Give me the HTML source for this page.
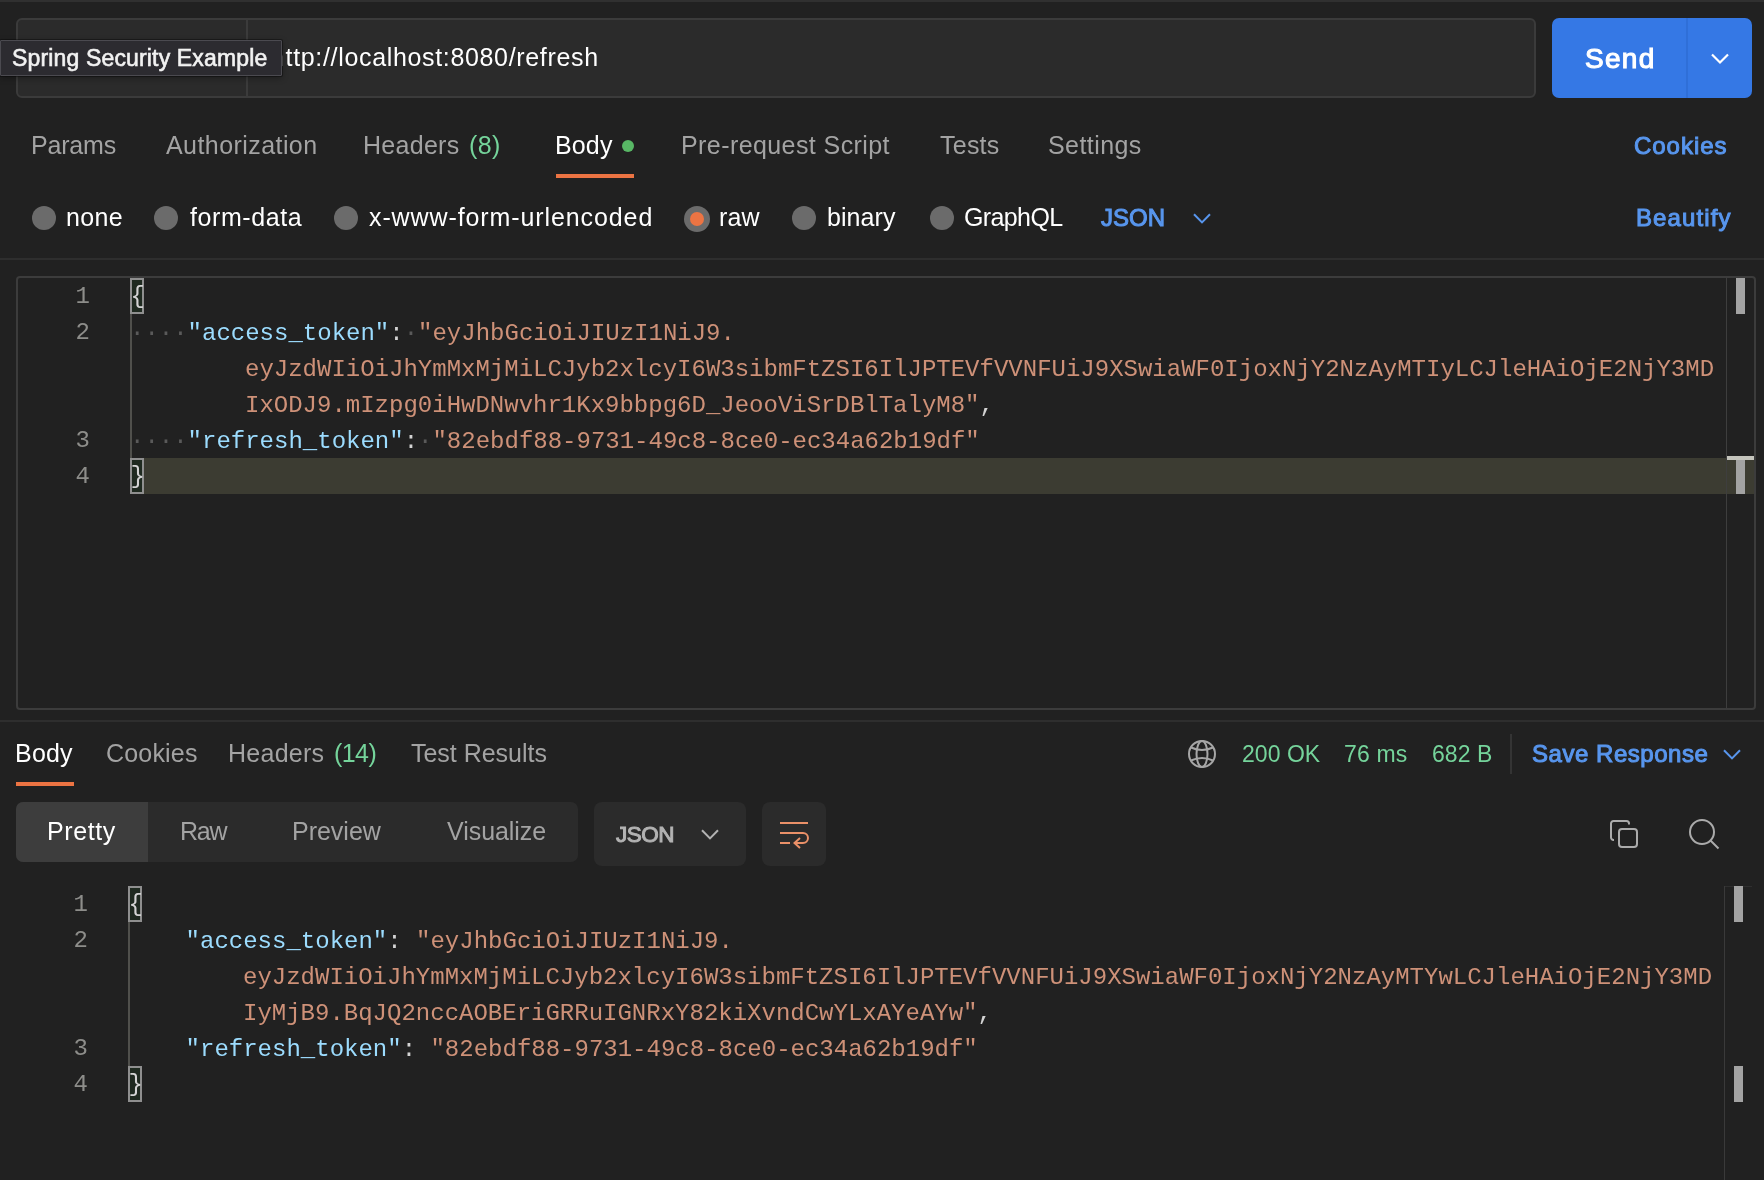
<!DOCTYPE html>
<html lang="en"><head><meta charset="utf-8"><title>Postman - Spring Security Example</title>
<style>
html,body{margin:0;padding:0;background:#212121;}
body{width:1764px;height:1180px;position:relative;overflow:hidden;font-family:"Liberation Sans",sans-serif;}
.abs,.t,.cl,.ln{position:absolute;}
.t,.cl,.ln{will-change:transform;}
.t{white-space:pre;}
.cl,.ln{font-family:"Liberation Mono",monospace;font-size:24px;line-height:36px;height:36px;white-space:pre;color:#d4d4d4;padding-top:1.6px;box-sizing:border-box;}
.ln{width:60px;text-align:right;color:#8d8d8a;padding-top:0.6px;margin-left:1px;}
.br{position:relative;left:0.5px;top:-1px} .k{color:#9cdcfe} .s{color:#ce9178} .p{color:#d4d4d4} .ws{color:#5a5a5a}
.radio{position:absolute;width:24px;height:24px;border-radius:50%;background:#6b6b6b;}
.bm{position:absolute;width:14px;height:36px;box-sizing:border-box;border:2px solid #8f8f8f;background:#1f2a20;}
.mark{position:absolute;width:9px;height:36px;background:#a3a3a3;}
</style></head><body>
<!-- top strip -->
<div class="abs" style="left:0;top:0;width:1764px;height:2px;background:#303030"></div>
<!-- url bar -->
<div class="abs" style="left:16px;top:18px;width:1520px;height:80px;box-sizing:border-box;border:2px solid #3b3b3b;border-radius:6px;background:#2b2b2b"></div>
<div class="abs" style="left:246px;top:20px;width:2px;height:76px;background:#3b3b3b"></div>
<!-- send -->
<div class="abs" style="left:1552px;top:18px;width:200px;height:80px;border-radius:7px;background:#3578e5"></div>
<div class="abs" style="left:1686px;top:18px;width:2px;height:80px;background:#2f6fd8"></div>
<svg class="abs" style="left:1706px;top:45px" width="28" height="28" viewBox="0 0 28 28"><path d="M6 9.5 L14 17.5 L22 9.5" fill="none" stroke="#fff" stroke-width="2.2"/></svg>
<!-- tooltip -->
<div class="abs" style="left:0;top:40px;width:282px;height:36px;box-sizing:border-box;border:1px solid #4b4a50;border-radius:1px;background:#2c2b30;z-index:2;box-shadow:0 0 0 1px rgba(0,0,0,.35),0 2px 6px rgba(0,0,0,.35)"></div>
<!-- request tabs -->
<div class="abs" style="left:556px;top:174px;width:78px;height:4px;background:#ec7443"></div>
<div class="abs" style="left:622px;top:140px;width:12px;height:12px;border-radius:50%;background:#58b765"></div>
<!-- radios -->
<div class="radio" style="left:32px;top:206px"></div>
<div class="radio" style="left:154px;top:206px"></div>
<div class="radio" style="left:334px;top:206px"></div>
<div class="radio" style="left:684px;top:206px;width:26px;height:26px"></div>
<div class="abs" style="left:690px;top:212px;width:14px;height:14px;border-radius:50%;background:#ec7443"></div>
<div class="radio" style="left:792px;top:206px"></div>
<div class="radio" style="left:930px;top:206px"></div>
<svg class="abs" style="left:1190px;top:208px" width="24" height="20" viewBox="0 0 24 20"><path d="M4 6.2 L12 14.4 L20 6.2" fill="none" stroke="#5896ee" stroke-width="2"/></svg>
<!-- separator -->
<div class="abs" style="left:0;top:258px;width:1764px;height:2px;background:#2e2e2e"></div>
<!-- request editor -->
<div class="abs" style="left:16px;top:276px;width:1740px;height:434px;box-sizing:border-box;border:2px solid #3c3c3c;border-radius:4px"></div>
<div class="abs" style="left:130px;top:458px;width:1624px;height:36px;background:#3c3c32"></div>
<div class="abs" style="left:1726px;top:278px;width:1px;height:430px;background:#3e3e3e"></div>
<div class="abs" style="left:130px;top:314px;width:2px;height:144px;background:#50504c"></div>
<div class="bm" style="left:130px;top:278px"></div>
<div class="bm" style="left:130px;top:458px"></div>
<div class="mark" style="left:1736px;top:278px"></div>
<div class="mark" style="left:1736px;top:458px"></div>
<div class="abs" style="left:1727px;top:456px;width:27px;height:4px;background:#c4c4bc"></div>
<div class="ln" style="left:29px;top:278px">1</div>
<div class="ln" style="left:29px;top:314px">2</div>
<div class="ln" style="left:29px;top:422px">3</div>
<div class="ln" style="left:29px;top:458px">4</div>
<div class="cl" style="left:130.2px;top:278px"><span class="p br">{</span></div>
<div class="cl" style="left:130.2px;top:314px"><span class="ws">····</span><span class="k">"access_token"</span><span class="p">:</span><span class="ws">·</span><span class="s">"eyJhbGciOiJIUzI1NiJ9.</span></div>
<div class="cl" style="left:245.4px;top:350px"><span class="s">eyJzdWIiOiJhYmMxMjMiLCJyb2xlcyI6W3sibmFtZSI6IlJPTEVfVVNFUiJ9XSwiaWF0IjoxNjY2NzAyMTIyLCJleHAiOjE2NjY3MD</span></div>
<div class="cl" style="left:245.4px;top:386px"><span class="s">IxODJ9.mIzpg0iHwDNwvhr1Kx9bbpg6D_JeooViSrDBlTalyM8"</span><span class="p">,</span></div>
<div class="cl" style="left:130.2px;top:422px"><span class="ws">····</span><span class="k">"refresh_token"</span><span class="p">:</span><span class="ws">·</span><span class="s">"82ebdf88-9731-49c8-8ce0-ec34a62b19df"</span></div>
<div class="cl" style="left:130.2px;top:458px"><span class="p br">}</span></div>
<!-- separator -->
<div class="abs" style="left:0;top:720px;width:1764px;height:2px;background:#2e2e2e"></div>
<!-- response tabs -->
<div class="abs" style="left:16px;top:782px;width:58px;height:4px;background:#ec7443"></div>
<svg class="abs" style="left:1186px;top:738px" width="32" height="32" viewBox="0 0 32 32" fill="none" stroke="#a6a6a6" stroke-width="2"><circle cx="16" cy="16" r="13"/><ellipse cx="16" cy="16" rx="5.5" ry="13"/><path d="M5 9.5 Q16 14.5 27 9.5"/><path d="M5 22.5 Q16 17.5 27 22.5"/></svg>
<div class="abs" style="left:1510px;top:734px;width:2px;height:40px;background:#343434"></div>
<svg class="abs" style="left:1720px;top:744px" width="24" height="20" viewBox="0 0 24 20"><path d="M4 6.2 L12 14.4 L20 6.2" fill="none" stroke="#5896ee" stroke-width="2"/></svg>
<!-- view switch -->
<div class="abs" style="left:16px;top:802px;width:562px;height:60px;border-radius:7px;background:#2b2b2b"></div>
<div class="abs" style="left:16px;top:802px;width:132px;height:60px;border-radius:7px 0 0 7px;background:#3d3d3d"></div>
<div class="abs" style="left:594px;top:802px;width:152px;height:64px;border-radius:8px;background:#2b2b2b"></div>
<svg class="abs" style="left:698px;top:824px" width="24" height="20" viewBox="0 0 24 20"><path d="M4 6.2 L12 14.4 L20 6.2" fill="none" stroke="#b3b3b3" stroke-width="2"/></svg>
<div class="abs" style="left:762px;top:802px;width:64px;height:64px;border-radius:8px;background:#2b2b2b"></div>
<svg class="abs" style="left:762px;top:802px" width="64" height="64" viewBox="0 0 64 64" fill="none" stroke="#ea9068" stroke-width="2"><path d="M18 21 H46"/><path d="M18 31 H41 A5 5 0 0 1 41 41 H33"/><path d="M18 41 H28"/><path d="M38 36 L32.5 41 L38 46"/></svg>
<!-- copy / search -->
<svg class="abs" style="left:1604px;top:814px" width="40" height="40" viewBox="0 0 40 40" fill="none" stroke="#ababab" stroke-width="2"><rect x="15" y="15" width="18" height="18" rx="3"/><path d="M10 26 H9.5 A2.5 2.5 0 0 1 7 23.500 V9.500 A2.500 2.500 0 0 1 9.500 7 H22.500 A2.500 2.500 0 0 1 25 9.500 V10.500"/></svg>
<svg class="abs" style="left:1684px;top:814px" width="40" height="40" viewBox="0 0 40 40" fill="none" stroke="#ababab" stroke-width="2"><circle cx="18" cy="18" r="12"/><path d="M26.500 26.500 L34.500 34.500"/></svg>
<!-- response editor -->
<div class="abs" style="left:1724px;top:886px;width:1px;height:294px;background:#3a3a3a"></div>
<div class="abs" style="left:1725px;top:886px;width:27px;height:1px;background:#2f2f2f"></div>
<div class="abs" style="left:128px;top:922px;width:2px;height:144px;background:#50504c"></div>
<div class="bm" style="left:128px;top:886px"></div>
<div class="bm" style="left:128px;top:1066px"></div>
<div class="mark" style="left:1734px;top:886px"></div>
<div class="mark" style="left:1734px;top:1066px"></div>
<div class="ln" style="left:27px;top:886px">1</div>
<div class="ln" style="left:27px;top:922px">2</div>
<div class="ln" style="left:27px;top:1030px">3</div>
<div class="ln" style="left:27px;top:1066px">4</div>
<div class="cl" style="left:128.2px;top:886px"><span class="p br">{</span></div>
<div class="cl" style="left:128.2px;top:922px">    <span class="k">"access_token"</span><span class="p">:</span> <span class="s">"eyJhbGciOiJIUzI1NiJ9.</span></div>
<div class="cl" style="left:243.4px;top:958px"><span class="s">eyJzdWIiOiJhYmMxMjMiLCJyb2xlcyI6W3sibmFtZSI6IlJPTEVfVVNFUiJ9XSwiaWF0IjoxNjY2NzAyMTYwLCJleHAiOjE2NjY3MD</span></div>
<div class="cl" style="left:243.4px;top:994px"><span class="s">IyMjB9.BqJQ2nccAOBEriGRRuIGNRxY82kiXvndCwYLxAYeAYw"</span><span class="p">,</span></div>
<div class="cl" style="left:128.2px;top:1030px">    <span class="k">"refresh_token"</span><span class="p">:</span> <span class="s">"82ebdf88-9731-49c8-8ce0-ec34a62b19df"</span></div>
<div class="cl" style="left:128.2px;top:1066px"><span class="p br">}</span></div>
<!-- texts -->
<span class="t" style="left:31.00px;top:131px;line-height:28px;font-size:25px;font-weight:400;color:#a3a3a3;letter-spacing:-0.187px">Params</span>
<span class="t" style="left:165.60px;top:131px;line-height:28px;font-size:25px;font-weight:400;color:#a3a3a3;letter-spacing:0.432px">Authorization</span>
<span class="t" style="left:363.00px;top:131px;line-height:28px;font-size:25px;font-weight:400;color:#a3a3a3;letter-spacing:0.284px">Headers</span>
<span class="t" style="left:468.70px;top:131px;line-height:28px;font-size:25px;font-weight:400;color:#75d49b;letter-spacing:0.335px">(8)</span>
<span class="t" style="left:555.00px;top:131px;line-height:28px;font-size:25px;font-weight:400;color:#ffffff;letter-spacing:0.139px">Body</span>
<span class="t" style="left:681.40px;top:131px;line-height:28px;font-size:25px;font-weight:400;color:#a3a3a3;letter-spacing:0.417px">Pre-request Script</span>
<span class="t" style="left:940.40px;top:131px;line-height:28px;font-size:25px;font-weight:400;color:#a3a3a3;letter-spacing:0.238px">Tests</span>
<span class="t" style="left:1047.90px;top:131px;line-height:28px;font-size:25px;font-weight:400;color:#a3a3a3;letter-spacing:0.424px">Settings</span>
<span class="t" style="left:1634.30px;top:132px;line-height:27px;font-size:24px;font-weight:400;color:#5896ee;letter-spacing:0.965px;-webkit-text-stroke:1.0px #5896ee">Cookies</span>
<span class="t" style="left:65.80px;top:203px;line-height:28px;font-size:25px;font-weight:400;color:#ffffff;letter-spacing:0.330px">none</span>
<span class="t" style="left:189.60px;top:203px;line-height:28px;font-size:25px;font-weight:400;color:#ffffff;letter-spacing:0.578px">form-data</span>
<span class="t" style="left:369.40px;top:203px;line-height:28px;font-size:25px;font-weight:400;color:#ffffff;letter-spacing:0.898px">x-www-form-urlencoded</span>
<span class="t" style="left:718.50px;top:203px;line-height:28px;font-size:25px;font-weight:400;color:#ffffff;letter-spacing:0.085px">raw</span>
<span class="t" style="left:827.00px;top:203px;line-height:28px;font-size:25px;font-weight:400;color:#ffffff;letter-spacing:0.082px">binary</span>
<span class="t" style="left:963.80px;top:203px;line-height:28px;font-size:25px;font-weight:400;color:#ffffff;letter-spacing:-0.621px">GraphQL</span>
<span class="t" style="left:1101.30px;top:204px;line-height:27px;font-size:24px;font-weight:400;color:#5896ee;letter-spacing:0.041px;-webkit-text-stroke:1.0px #5896ee">JSON</span>
<span class="t" style="left:1636.00px;top:204px;line-height:27px;font-size:24px;font-weight:400;color:#5896ee;letter-spacing:1.112px;-webkit-text-stroke:1.0px #5896ee">Beautify</span>
<span class="t" style="left:12.20px;top:45px;line-height:26px;font-size:23px;font-weight:400;color:#f2f2f2;letter-spacing:0.157px;z-index:3;-webkit-text-stroke:0.6px #f2f2f2">Spring Security Example</span>
<span class="t" style="left:1584.55px;top:43px;line-height:31px;font-size:28px;font-weight:400;color:#ffffff;letter-spacing:1.293px;-webkit-text-stroke:1.1px #ffffff">Send</span>
<span class="t" style="left:15.00px;top:739px;line-height:28px;font-size:25px;font-weight:400;color:#ffffff;letter-spacing:0.206px">Body</span>
<span class="t" style="left:106.10px;top:739px;line-height:28px;font-size:25px;font-weight:400;color:#a3a3a3;letter-spacing:0.180px">Cookies</span>
<span class="t" style="left:228.40px;top:739px;line-height:28px;font-size:25px;font-weight:400;color:#a3a3a3;letter-spacing:0.268px">Headers</span>
<span class="t" style="left:334.20px;top:739px;line-height:28px;font-size:25px;font-weight:400;color:#75d49b;letter-spacing:-0.578px">(14)</span>
<span class="t" style="left:410.80px;top:739px;line-height:28px;font-size:25px;font-weight:400;color:#a3a3a3;letter-spacing:-0.023px">Test Results</span>
<span class="t" style="left:1241.90px;top:741px;line-height:26px;font-size:23px;font-weight:400;color:#75d49b;letter-spacing:0.029px">200 OK</span>
<span class="t" style="left:1344.40px;top:741px;line-height:26px;font-size:23px;font-weight:400;color:#75d49b;letter-spacing:0.142px">76 ms</span>
<span class="t" style="left:1432.00px;top:741px;line-height:26px;font-size:23px;font-weight:400;color:#75d49b;letter-spacing:0.059px">682 B</span>
<span class="t" style="left:1531.50px;top:740px;line-height:27px;font-size:24px;font-weight:400;color:#5896ee;letter-spacing:0.534px;-webkit-text-stroke:1.0px #5896ee">Save Response</span>
<span class="t" style="left:46.90px;top:817px;line-height:28px;font-size:25px;font-weight:400;color:#ffffff;letter-spacing:0.601px">Pretty</span>
<span class="t" style="left:179.60px;top:817px;line-height:28px;font-size:25px;font-weight:400;color:#a3a3a3;letter-spacing:-1.279px">Raw</span>
<span class="t" style="left:291.80px;top:817px;line-height:28px;font-size:25px;font-weight:400;color:#a3a3a3;letter-spacing:-0.010px">Preview</span>
<span class="t" style="left:447.40px;top:817px;line-height:28px;font-size:25px;font-weight:400;color:#a3a3a3;letter-spacing:-0.049px">Visualize</span>
<span class="t" style="left:615.90px;top:822px;line-height:25px;font-size:22.5px;font-weight:400;color:#b3b3b3;letter-spacing:-0.486px;-webkit-text-stroke:1.0px #b3b3b3">JSON</span>
<span class="t" style="left:270.83px;top:43px;line-height:28px;font-size:25px;font-weight:400;color:#ffffff;letter-spacing:0.662px;z-index:1"><span style="margin-left:-1px;margin-right:1px">h</span>ttp://localhost:8080/refresh</span>
</body></html>
